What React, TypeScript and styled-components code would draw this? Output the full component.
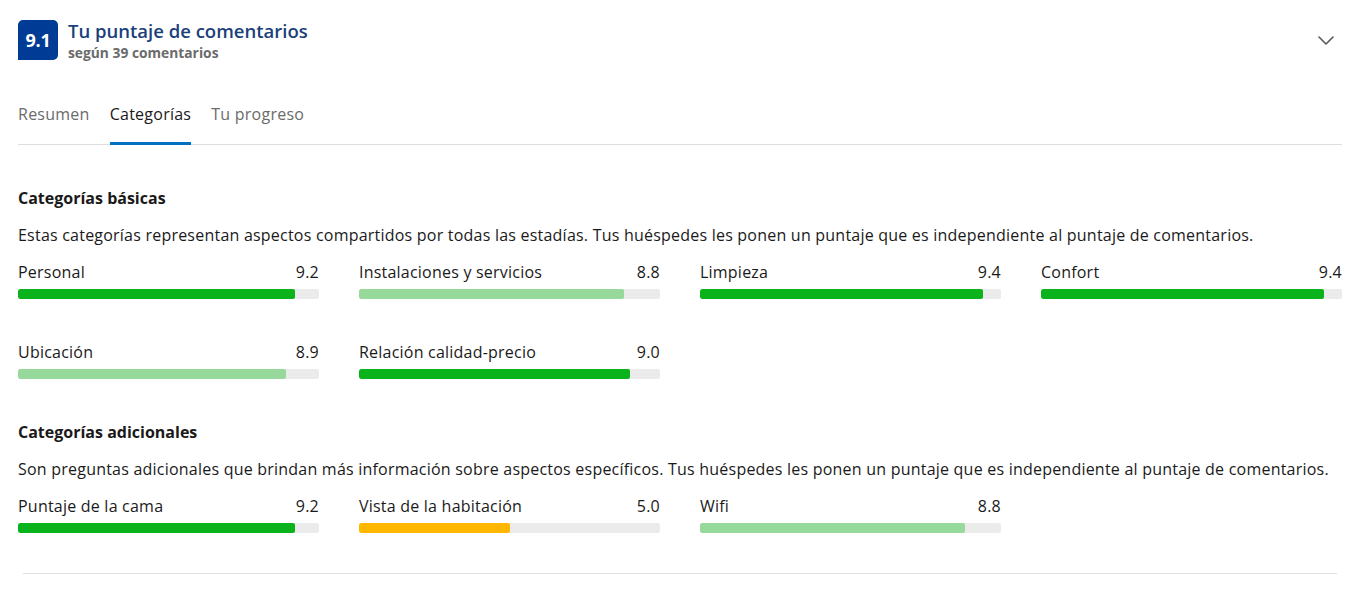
import React from "react";
import styled, { createGlobalStyle } from "styled-components";

const Global = createGlobalStyle`
  html, body { margin: 0; padding: 0; background: #fff; }
  body { font-family: "Open Sans", "Noto Sans", sans-serif; color: #1a1a1a; }
  * { box-sizing: border-box; }
`;

const Page = styled.div`
  width: 1360px;
  padding: 20px 18px 0 18px;
`;

const Header = styled.div`
  display: flex;
  align-items: center;
  height: 40px;
`;

const Badge = styled.div`
  width: 40px;
  height: 40px;
  background: #003b95;
  color: #fff;
  border-radius: 5px 5px 5px 0;
  display: flex;
  align-items: center;
  justify-content: center;
  font-weight: 700;
  font-size: 18px;
  letter-spacing: -0.3px;
`;

const HeaderText = styled.div`
  margin-left: 10px;
  align-self: flex-start;
  display: flex;
  flex-direction: column;
  flex: 1;
`;

const Title = styled.div`
  font-size: 18.5px;
  font-weight: 600;
  color: #1a3f7a;
  line-height: 22px;
`;

const Subtitle = styled.div`
  margin-top: 1px;
  font-size: 13.8px;
  font-weight: 700;
  color: #6b6b6b;
  line-height: 20px;
`;

const Toggle = styled.button`
  border: 0;
  background: transparent;
  padding: 0;
  margin-right: 8px;
  width: 16px;
  height: 16px;
  display: flex;
  align-items: center;
  justify-content: center;
  cursor: pointer;
`;

const TabBar = styled.div`
  display: flex;
  gap: 20px;
  margin-top: 26px;
  border-bottom: 1px solid #dedede;
`;

const Tab = styled.div<{ $active?: boolean }>`
  padding: 16px 0 0 0;
  line-height: 24px;
  height: 59px;
  font-size: 16px;
  color: ${(p) => (p.$active ? "#1a1a1a" : "#6b6b6b")};
  border-bottom: 3px solid ${(p) => (p.$active ? "#0071c2" : "transparent")};
  margin-bottom: -1px;
  letter-spacing: 0.25px;
`;

const Section = styled.section`
  margin-top: 41px;
`;

const Heading = styled.h3`
  margin: 0;
  font-size: 16px;
  font-weight: 700;
  line-height: 24px;
`;

const Description = styled.p`
  margin: 13px 0 0 0;
  font-size: 16px;
  line-height: 24px;
  letter-spacing: 0.22px;
`;

const Grid = styled.div`
  display: grid;
  grid-template-columns: repeat(4, 301px);
  column-gap: 40px;
  row-gap: 41px;
  margin-top: 13px;
`;

const Item = styled.div`
  display: flex;
  flex-direction: column;
`;

const ItemHead = styled.div`
  display: flex;
  justify-content: space-between;
  font-size: 16px;
  line-height: 24px;
  letter-spacing: 0.22px;
`;

const Track = styled.div`
  margin-top: 5px;
  height: 10px;
  background: #ebebeb;
  border-radius: 2px;
  overflow: hidden;
`;

const Fill = styled.div<{ $tone: "high" | "good" | "mid" }>`
  height: 100%;
  border-radius: 2px;
  background: ${(p) =>
    p.$tone === "high" ? "#0ab21b" : p.$tone === "good" ? "#97d89b" : "#ffb700"};
`;

const Divider = styled.hr`
  margin: 40px 5px 0 5px;
  border: 0;
  border-top: 1px solid #e0e0e0;
`;

type Cat = { name: string; score: number };

const basic: Cat[] = [
  { name: "Personal", score: 9.2 },
  { name: "Instalaciones y servicios", score: 8.8 },
  { name: "Limpieza", score: 9.4 },
  { name: "Confort", score: 9.4 },
  { name: "Ubicación", score: 8.9 },
  { name: "Relación calidad-precio", score: 9.0 },
];

const extra: Cat[] = [
  { name: "Puntaje de la cama", score: 9.2 },
  { name: "Vista de la habitación", score: 5.0 },
  { name: "Wifi", score: 8.8 },
];

const toneOf = (s: number) => (s >= 9 ? "high" : s >= 7 ? "good" : "mid");

const Bar = ({ c }: { c: Cat }) => (
  <Item>
    <ItemHead>
      <span>{c.name}</span>
      <span>{c.score.toFixed(1)}</span>
    </ItemHead>
    <Track>
      <Fill $tone={toneOf(c.score)} style={{ width: `${c.score * 10}%` }} />
    </Track>
  </Item>
);

export default function App() {
  return (
    <Page>
      <Global />
      <Header>
        <Badge>9.1</Badge>
        <HeaderText>
          <Title>Tu puntaje de comentarios</Title>
          <Subtitle>según 39 comentarios</Subtitle>
        </HeaderText>
        <Toggle aria-label="Expandir">
          <svg width="16" height="9" viewBox="0 0 16 9" fill="none">
            <polyline points="1,1 8,8 15,1" stroke="#595959" strokeWidth="1.6" strokeLinecap="round" strokeLinejoin="round" />
          </svg>
        </Toggle>
      </Header>
      <TabBar>
        <Tab>Resumen</Tab>
        <Tab $active>Categorías</Tab>
        <Tab>Tu progreso</Tab>
      </TabBar>
      <Section>
        <Heading>Categorías básicas</Heading>
        <Description>
          Estas categorías representan aspectos compartidos por todas las estadías. Tus huéspedes les ponen un puntaje que es independiente al puntaje de comentarios.
        </Description>
        <Grid>
          {basic.map((c) => (
            <Bar key={c.name} c={c} />
          ))}
        </Grid>
      </Section>
      <Section>
        <Heading>Categorías adicionales</Heading>
        <Description>
          Son preguntas adicionales que brindan más información sobre aspectos específicos. Tus huéspedes les ponen un puntaje que es independiente al puntaje de comentarios.
        </Description>
        <Grid>
          {extra.map((c) => (
            <Bar key={c.name} c={c} />
          ))}
        </Grid>
      </Section>
      <Divider />
    </Page>
  );
}
